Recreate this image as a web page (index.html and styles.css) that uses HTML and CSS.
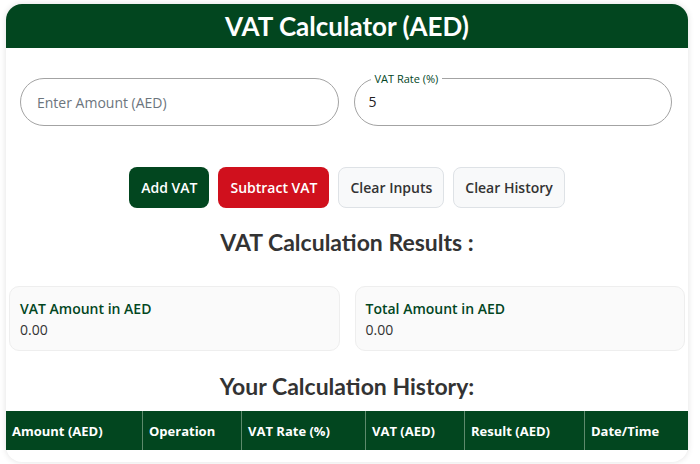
FILE: index.html
```html
<!DOCTYPE html>
<html lang="en">
<head>
  <meta charset="UTF-8">
  <title>VAT Calculator (AED)</title>
  <meta name="viewport" content="width=device-width, initial-scale=1.0">
  <link rel="stylesheet" href="styles.css">
</head>
<body>
  <div class="card">
    <div class="card-header">
      <h1>VAT Calculator (AED)</h1>
    </div>

    <div class="inputs">
      <input type="text" class="amount" placeholder="Enter Amount (AED)">
      <fieldset class="rate">
        <legend>VAT Rate (%)</legend>
        <input type="text" value="5">
      </fieldset>
    </div>

    <div class="buttons">
      <button class="btn btn-add">Add VAT</button>
      <button class="btn btn-sub">Subtract VAT</button>
      <button class="btn btn-light">Clear Inputs</button>
      <button class="btn btn-light">Clear History</button>
    </div>

    <h2>VAT Calculation Results :</h2>

    <div class="results">
      <div class="result-box">
        <div class="result-label">VAT Amount in AED</div>
        <div class="result-value">0.00</div>
      </div>
      <div class="result-box">
        <div class="result-label">Total Amount in AED</div>
        <div class="result-value">0.00</div>
      </div>
    </div>

    <h2 class="history-title">Your Calculation History:</h2>

    <table class="history">
      <thead>
        <tr>
          <th>Amount (AED)</th>
          <th>Operation</th>
          <th>VAT Rate (%)</th>
          <th>VAT (AED)</th>
          <th>Result (AED)</th>
          <th>Date/Time</th>
        </tr>
      </thead>
      <tbody></tbody>
    </table>
  </div>
</body>
</html>
```

FILE: styles.css
```css
body {
  margin: 0;
  padding: 4px 12px 2px 6px;
  background: #ffffff;
  font-family: 'Open Sans', 'Noto Sans', sans-serif;
  color: #333;
}

.card {
  border-radius: 16px;
  box-shadow: 0 0 6px rgba(0,0,0,0.12);
  background: #fff;
  padding-bottom: 12px;
}

.card-header {
  background: #02461f;
  border-radius: 16px 16px 0 0;
  height: 44px;
  display: flex;
  align-items: center;
  justify-content: center;
}

h1 {
  margin: 0;
  color: #fff;
  font-family: 'Lato', sans-serif;
  font-size: 26px;
  font-weight: 700;
}

.inputs {
  display: grid;
  grid-template-columns: 1fr 1fr;
  gap: 15px;
  align-items: end;
  padding: 0 16px 0 14px;
  margin-top: 23px;
}

.amount {
  height: 48px;
  box-sizing: border-box;
  border: 1px solid #a3a3a3;
  border-radius: 24px;
  padding: 0 16px;
  font-family: inherit;
  font-size: 14px;
  outline: none;
}

.amount::placeholder {
  color: #6c757d;
}

.rate {
  margin: 0;
  border: 1px solid #a3a3a3;
  border-radius: 24px;
  padding: 0 14px;
  height: 55px;
  box-sizing: border-box;
}

.rate legend {
  font-size: 11px;
  color: #02461f;
  padding: 0 4px;
  margin-left: 2px;
}

.rate input {
  border: none;
  outline: none;
  width: 100%;
  font-family: inherit;
  font-size: 14px;
  color: #222;
  padding: 6px 0 0;
  background: transparent;
}

.buttons {
  display: flex;
  justify-content: center;
  gap: 9px;
  margin-top: 41px;
}

.btn {
  font-family: inherit;
  font-size: 14px;
  font-weight: 600;
  height: 41px;
  padding: 0 11px;
  border-radius: 8px;
  border: 1px solid transparent;
}

.btn-add {
  background: #02461f;
  color: #fff;
}

.btn-sub {
  background: #d0101d;
  color: #fff;
}

.btn-light {
  background: #f8f9fa;
  border-color: #dee2e6;
  color: #333;
}

h2 {
  text-align: center;
  font-family: 'Lato', sans-serif;
  font-size: 23px;
  font-weight: 700;
  color: #333;
  margin: 20px 0 0;
}

.results {
  display: grid;
  grid-template-columns: 1fr 1fr;
  gap: 15px;
  padding: 0 3px;
  margin-top: 30px;
}

.result-box {
  background: #fafafa;
  border: 1px solid #eee;
  border-radius: 10px;
  padding: 12px 10px 11px;
}

.result-label {
  color: #02461f;
  font-weight: 600;
  font-size: 14px;
}

.result-value {
  font-size: 14px;
  margin-top: 2px;
}

.history-title {
  margin-top: 21px;
}

.history {
  width: 100%;
  border-collapse: collapse;
  margin-top: 11px;
}

.history th {
  background: #02461f;
  color: #fff;
  text-align: left;
  font-size: 13px;
  font-weight: 700;
  height: 39px;
  padding: 0 6px;
  border-left: 1px solid #5d8a6c;
}

.history th:first-child {
  border-left: none;
  width: 124px;
}

.history th:nth-child(2) { width: 86px; }
.history th:nth-child(3) { width: 111px; }
.history th:nth-child(4) { width: 86px; }
.history th:nth-child(5) { width: 107px; }
```
